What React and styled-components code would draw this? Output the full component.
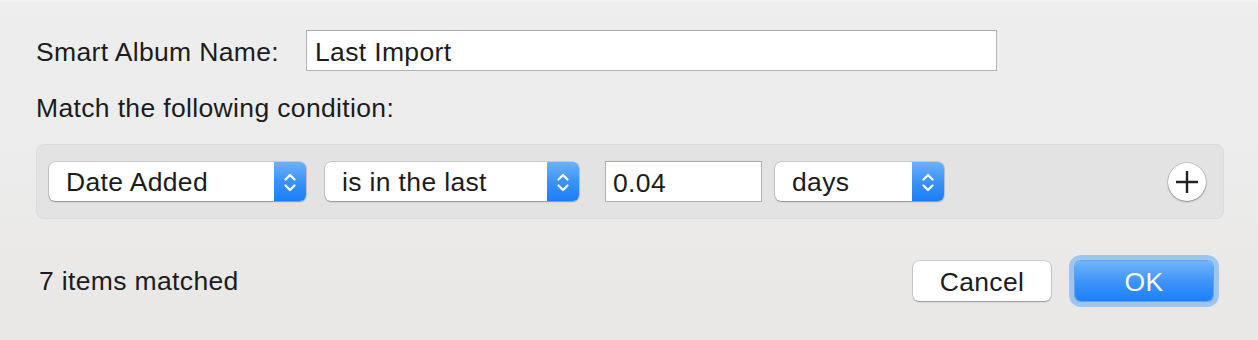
import React from "react"
import styled, { createGlobalStyle } from "styled-components"

const GlobalStyle = createGlobalStyle`
  html, body {
    margin: 0;
    padding: 0;
  }
  body {
    width: 1258px;
    height: 340px;
    overflow: hidden;
    font-family: "Liberation Sans", Arial, sans-serif;
    color: #1c1c1c;
    background: linear-gradient(180deg, #eeeeee 0%, #ececec 45%, #e9e7e5 100%);
  }
`

const Dialog = styled.div`
  box-sizing: border-box;
  height: 340px;
  border-top: 2px solid #f2f2f2;
  padding: 28px 34px 0 36px;
  font-size: 26.5px;
  line-height: 30px;
  letter-spacing: 0.35px;
`

const NameRow = styled.div`
  display: flex;
  align-items: center;
  height: 41px;
`

const Label = styled.span`
  width: 270px;
  padding-top: 2px;
`

const TextField = styled.div`
  box-sizing: border-box;
  width: ${(p) => p.$width}px;
  height: 41px;
  margin-right: ${(p) => p.$gap || 0}px;
  display: flex;
  align-items: center;
  padding: 2px 0 0 ${(p) => p.$pad || 8}px;
  background: #ffffff;
  border: 1px solid #b3b3b3;
  border-top-color: #a9a9a9;
`

const Caption = styled.div`
  margin-top: 22px;
`

const ConditionPanel = styled.div`
  box-sizing: border-box;
  margin-top: 21px;
  width: 1188px;
  height: 75px;
  display: flex;
  align-items: center;
  padding: 0 17px 0 12px;
  background: #e3e3e3;
  border: 1px solid #dcdcdc;
  border-radius: 8px;
`

const Popup = styled.div`
  box-sizing: border-box;
  width: ${(p) => p.$width}px;
  height: 39px;
  margin-right: ${(p) => p.$gap || 0}px;
  display: flex;
  align-items: stretch;
  background: #ffffff;
  border-radius: 6px;
  box-shadow: 0 0 0 0.5px rgba(0, 0, 0, 0.22), 0 1px 1.5px rgba(0, 0, 0, 0.28);
  overflow: hidden;
`

const PopupText = styled.span`
  flex: 1;
  display: flex;
  align-items: center;
  padding: 1px 0 0 17px;
`

const Stepper = styled.span`
  width: 32px;
  display: flex;
  align-items: center;
  justify-content: center;
  background: linear-gradient(180deg, #6cb1fb 0%, #3b93f8 50%, #1a7ef7 100%);
`

const AddButton = styled.button`
  margin-left: auto;
  width: 38px;
  height: 38px;
  padding: 0;
  display: flex;
  align-items: center;
  justify-content: center;
  border: none;
  border-radius: 50%;
  background: #ffffff;
  box-shadow: 0 0 0 0.5px rgba(0, 0, 0, 0.25), 0 1px 2px rgba(0, 0, 0, 0.3);
`

const Footer = styled.div`
  margin-top: 36px;
  display: flex;
  align-items: center;
  height: 52px;
  padding-right: 11px;
`

const Status = styled.span`
  padding-left: 3px;
  margin-right: auto;
`

const Button = styled.button`
  box-sizing: border-box;
  width: 138px;
  height: 40px;
  padding: 1px 0 0;
  font: inherit;
  letter-spacing: inherit;
  border: none;
  border-radius: 6px;
  color: ${(p) => (p.$primary ? "#ffffff" : "#1c1c1c")};
  background: ${(p) =>
    p.$primary
      ? "linear-gradient(180deg, #71b5fb 0%, #3f95f9 50%, #1b80fb 100%)"
      : "#ffffff"};
  box-shadow: ${(p) =>
    p.$primary
      ? "0 0 0 1px #5aa3f3, 0 0 0 6px #9dc5ee"
      : "0 0 0 0.5px rgba(0, 0, 0, 0.22), 0 1px 1.5px rgba(0, 0, 0, 0.28)"};
  margin-left: ${(p) => p.$gap || 0}px;
`

const Chevrons = () => (
  <svg width="32" height="39" viewBox="0 0 32 39">
    <path
      d="M11.5 17.5 L16 13 L20.5 17.5 M11.5 23.5 L16 28 L20.5 23.5"
      fill="none"
      stroke="#ffffff"
      strokeWidth="2.2"
      strokeLinecap="round"
      strokeLinejoin="round"
    />
  </svg>
)

const PlusIcon = () => (
  <svg width="24" height="24" viewBox="0 0 24 24">
    <path d="M12 1 V23 M1 12 H23" stroke="#222222" strokeWidth="2.4" />
  </svg>
)

const Select = ({ width, gap, children }) => (
  <Popup $width={width} $gap={gap}>
    <PopupText>{children}</PopupText>
    <Stepper>
      <Chevrons />
    </Stepper>
  </Popup>
)

const App = () => {
  return (
    <>
      <GlobalStyle />
      <Dialog>
        <NameRow>
          <Label>Smart Album Name:</Label>
          <TextField $width={691}>Last Import</TextField>
        </NameRow>
        <Caption>Match the following condition:</Caption>
        <ConditionPanel>
          <Select width={257} gap={19}>
            Date Added
          </Select>
          <Select width={254} gap={26}>
            is in the last
          </Select>
          <TextField $width={157} $pad={7} $gap={13}>
            0.04
          </TextField>
          <Select width={169}>days</Select>
          <AddButton aria-label="Add condition">
            <PlusIcon />
          </AddButton>
        </ConditionPanel>
        <Footer>
          <Status>7 items matched</Status>
          <Button>Cancel</Button>
          <Button $primary $gap={24}>
            OK
          </Button>
        </Footer>
      </Dialog>
    </>
  )
}

export default App
